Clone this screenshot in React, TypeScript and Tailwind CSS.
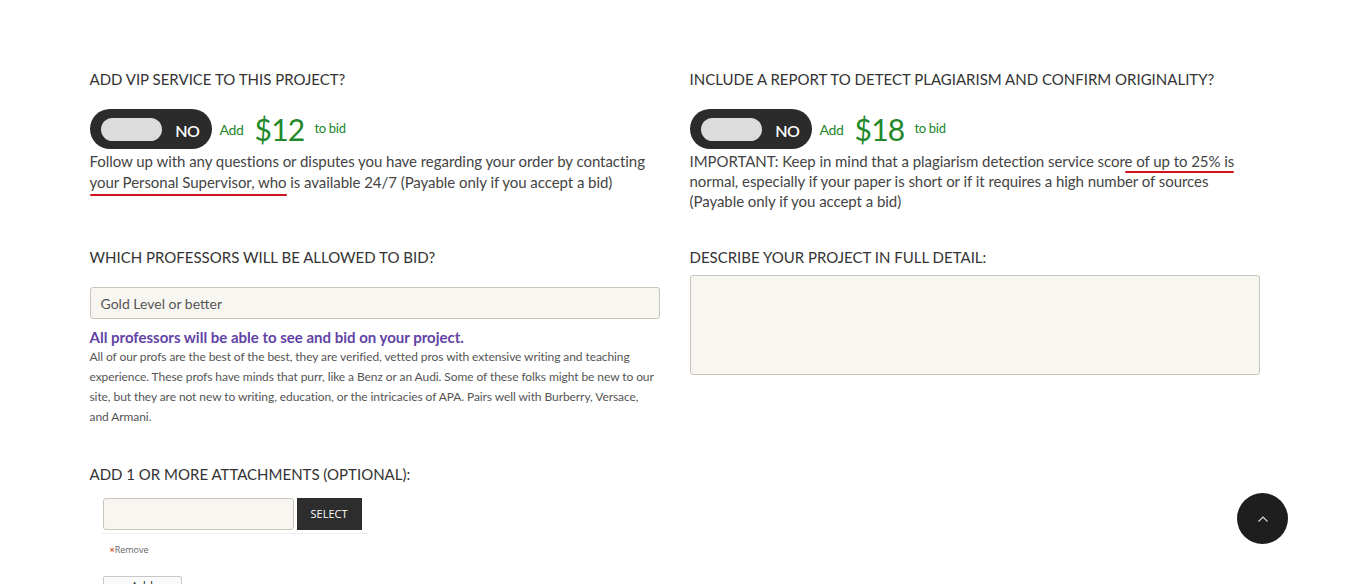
import React from "react";

const font = { fontFamily: "Lato, 'Open Sans', sans-serif" };

function Toggle() {
  return (
    <div className="flex items-center h-[40px] w-[122px] rounded-full bg-[#2b2b2b] pl-[11px] pr-[12px] justify-between">
      <div className="h-[23px] w-[61px] rounded-full bg-[#dcdcdc]" />
      <span className="text-white text-[16px] font-semibold mt-[3px] tracking-[-0.5px]">NO</span>
    </div>
  );
}

function Price({ amount }: { amount: string }) {
  return (
    <div className="flex items-center text-[#23882a]">
      <span className="text-[14px] ml-[8px] tracking-[-0.3px]">Add</span>
      <span className="text-[30px] ml-[11px] leading-none tracking-[-0.8px]">{amount}</span>
      <span className="text-[13px] ml-[10px] tracking-[-0.3px]">to bid</span>
    </div>
  );
}

export default function App() {
  return (
    <div className="min-h-[584px] bg-white text-[#3a3a3a] relative" style={font}>
      <div className="mx-auto w-[1170px] pt-[69px]">
        <div className="grid grid-cols-2 gap-x-[30px]">
          {/* Row 1 left */}
          <div>
            <h3 className="text-[15px] leading-[20px] uppercase text-[#333]">Add VIP service to this project?</h3>
            <div className="flex items-center mt-[20px]">
              <Toggle />
              <Price amount="$12" />
            </div>
            <p className="text-[15px] leading-[21px] mt-[2px] text-[#444] tracking-[-0.05px]">
              Follow up with any questions or disputes you have regarding your order by contacting{" "}
              <span className="relative">
                your Personal Supervisor, who
                <span className="absolute left-0 right-0 -bottom-[5px] h-[2.5px] bg-[#d0141c] rounded-full" />
              </span>{" "}
              is available 24/7 (Payable only if you accept a bid)
            </p>
          </div>
          {/* Row 1 right */}
          <div>
            <h3 className="text-[15px] leading-[20px] uppercase text-[#333]">Include a report to detect plagiarism and confirm originality?</h3>
            <div className="flex items-center mt-[20px]">
              <Toggle />
              <Price amount="$18" />
            </div>
            <p className="text-[15px] leading-[20px] mt-[2px] text-[#444] tracking-[-0.05px]">
              IMPORTANT: Keep in mind that a plagiarism detection service scor
              <span className="relative">
                e of up to 25% is
                <span className="absolute left-0 right-0 -bottom-[3px] h-[2.5px] bg-[#d0141c] rounded-full" />
              </span>{" "}
              normal, especially if your paper is short or if it requires a high number of sources (Payable only if you accept a bid)
            </p>
          </div>

          {/* Row 2 left */}
          <div className="mt-[36px]">
            <h3 className="text-[15px] leading-[20px] uppercase text-[#333]">Which professors will be allowed to bid?</h3>
            <div className="mt-[20px] h-[32px] rounded-[3px] border border-[#c9c5b9] bg-[#f8f6f0] flex items-center px-[10px] text-[14px] text-[#555]">
              Gold Level or better
            </div>
            <div className="mt-[9px] text-[15px] leading-[19px] font-bold text-[#6243a6]">
              All professors will be able to see and bid on your project.
            </div>
            <p className="text-[12px] leading-[20px] text-[#555] tracking-[-0.08px]">
              All of our profs are the best of the best, they are verified, vetted pros with extensive writing and teaching experience. These profs have minds that purr, like a Benz or an Audi. Some of these folks might be new to our site, but they are not new to writing, education, or the intricacies of APA. Pairs well with Burberry, Versace, and Armani.
            </p>
          </div>
          {/* Row 2 right */}
          <div className="mt-[36px]">
            <h3 className="text-[15px] leading-[20px] uppercase text-[#333]">Describe your project in full detail:</h3>
            <div className="mt-[8px] h-[100px] rounded-[3px] border border-[#c9c5b9] bg-[#f8f6f0]" />
          </div>

          {/* Row 3 left */}
          <div className="mt-[37px]">
            <h3 className="text-[15px] leading-[20px] uppercase text-[#333]">Add 1 or more attachments (optional):</h3>
            <div className="mt-[14px] ml-[13px] flex items-center gap-[3px] pb-[3px] border-b border-[#f0f0f0] w-[265px]">
              <div className="h-[32px] w-[191px] rounded-[3px] border border-[#c9c5b9] bg-[#f8f6f0]" />
              <div className="h-[32px] w-[65px] bg-[#2d2d2d] text-white text-[11px] flex items-center justify-center" style={{ fontFamily: "'Open Sans', sans-serif" }}>
                SELECT
              </div>
            </div>
            <div className="ml-[20px] mt-[10px] text-[9px] text-[#666] leading-[12px]" style={{ fontFamily: "'Open Sans', sans-serif" }}>
              <span className="text-[#e0521a] font-bold">×</span>Remove
            </div>
            <div className="ml-[13px] mt-[20px] h-[30px] w-[79px] border border-[#c8c8c8] rounded-[2px] bg-[#fafafa] flex justify-center pt-[1px] leading-[18px] text-[12px] text-[#333]" style={{ fontFamily: "'Open Sans', sans-serif" }}>
              Add
            </div>
          </div>
          <div />
        </div>
      </div>

      <div className="fixed left-[1237px] top-[493px] w-[51px] h-[51px] rounded-full bg-[#1e1e1e] flex items-center justify-center">
        <svg width="12" height="8" viewBox="0 0 12 8" fill="none">
          <path d="M1.5 6.5 L6 2 L10.5 6.5" stroke="#d8d8d8" strokeWidth="1.2" />
        </svg>
      </div>
    </div>
  );
}
